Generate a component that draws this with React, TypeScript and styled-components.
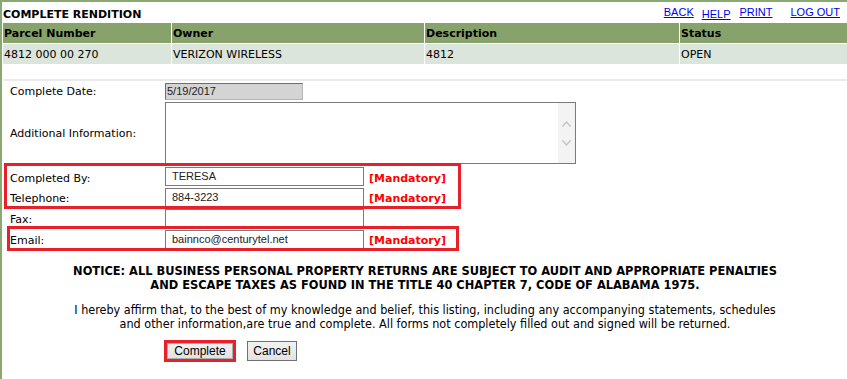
import React from 'react';
import styled, { createGlobalStyle } from 'styled-components';

const GlobalStyle = createGlobalStyle`
    html, body {
        margin: 0;
        padding: 0;
        background: #ffffff;
    }
    body {
        font-family: 'DejaVu Sans', Verdana, sans-serif;
        font-size: 11px;
        color: #000000;
    }
`;

const parcel = {
    number: '4812 000 00 270',
    owner: 'VERIZON WIRELESS',
    description: '4812',
    status: 'OPEN',
};

const Page = styled.div`
    height: 379px;
    box-sizing: border-box;
    border-top: 2px solid #8aa871;
    border-left: 2px solid #8aa871;
    padding-left: 1px;
`;

const TitleBar = styled.div`
    display: flex;
    justify-content: space-between;
    height: 21px;
`;

const Title = styled.h1`
    margin: 0;
    padding-top: 6px;
    font-size: 11px;
    font-weight: bold;
    line-height: 13px;
`;

const Links = styled.nav`
    display: flex;
    align-items: flex-start;
    padding-top: 4px;
    padding-right: 7px;
`;

const NavLink = styled.a<{ $gap: number; $drop?: number }>`
    margin-left: ${({ $gap }) => $gap}px;
    margin-top: ${({ $drop }) => $drop || 0}px;
    font-family: 'Liberation Sans', Arial, sans-serif;
    font-size: 11px;
    line-height: 13px;
    color: #0000ee;
    text-decoration: underline;
    cursor: pointer;
`;

const Grid = styled.div`
    display: grid;
    grid-template-columns: 168px 252px 254px 1fr;
    column-gap: 1px;
    row-gap: 1px;
    margin-bottom: 15px;
`;

const HeadCell = styled.div`
    height: 20px;
    background: #87a36b;
    font-weight: bold;
    font-size: 11px;
    line-height: 21px;
    padding-left: 1px;
`;

const DataCell = styled.div`
    height: 20px;
    background: #dbe5db;
    font-size: 11px;
    line-height: 21px;
    padding-left: 1px;
`;

const Separator = styled.hr`
    margin: 0;
    border: 0;
    height: 2px;
    background: #ebebeb;
`;

const Form = styled.div`
    padding-left: 7px;
    display: flex;
    flex-direction: column;
`;

const Row = styled.div<{ $height: number; $drop?: number }>`
    display: grid;
    grid-template-columns: 155px 199px auto;
    align-items: center;
    height: ${({ $height }) => $height}px;

    & > label,
    & > span {
        padding-top: ${({ $drop }) => $drop || 0}px;
    }
`;

const Label = styled.label`
    font-size: 11px;
    line-height: 13px;
`;

const DateInput = styled.div`
    width: 138px;
    height: 17px;
    box-sizing: border-box;
    background: #d4d4d4;
    border: 1px solid #b4b4b4;
    border-top-color: #6e6e6e;
    border-left-color: #6e6e6e;
    font-family: 'Liberation Sans', Arial, sans-serif;
    font-size: 11px;
    line-height: 15px;
    padding-left: 1px;
    color: #222;
`;

const TextBox = styled.div`
    grid-column: 2 / 4;
    width: 411px;
    height: 62px;
    box-sizing: border-box;
    border: 1px solid #7a7a7a;
    display: flex;
    justify-content: flex-end;
    background: #fff;
`;

const ScrollTrack = styled.div`
    width: 17px;
    background: #f3f3f3;
    display: flex;
    flex-direction: column;
    align-items: center;
    justify-content: center;
    gap: 13px;
`;

const TextInput = styled.div`
    width: 199px;
    height: 19px;
    box-sizing: border-box;
    border: 1px solid #7a7a7a;
    font-family: 'Liberation Sans', Arial, sans-serif;
    font-size: 11px;
    line-height: 13px;
    padding: 2px 0 0 6px;
    color: #222;
    background: #fff;
`;

const Mandatory = styled.span`
    margin-left: 5px;
    color: #ff0000;
    font-weight: bold;
    font-size: 11px;
    line-height: 13px;
`;

const Marked = styled.div<{ $top: number; $left: number; $right: number; $bottom: number; $mt?: number }>`
    position: relative;
    width: 445px;
    margin-top: ${({ $mt }) => $mt || 0}px;

    &::after {
        content: '';
        position: absolute;
        top: ${({ $top }) => $top}px;
        left: ${({ $left }) => $left}px;
        right: ${({ $right }) => $right}px;
        bottom: ${({ $bottom }) => $bottom}px;
        border: 3px solid #e8202a;
        pointer-events: none;
    }
`;

const Notice = styled.p`
    margin: 14px 0 0 0;
    text-align: center;
    font-family: 'DejaVu Sans Condensed', 'DejaVu Sans', sans-serif;
    font-stretch: condensed;
    font-weight: bold;
    font-size: 12.7px;
    line-height: 14px;
`;

const Affirm = styled.p`
    margin: 11px 0 0 0;
    text-align: center;
    font-family: 'DejaVu Sans Condensed', 'DejaVu Sans', sans-serif;
    font-stretch: condensed;
    font-size: 12.5px;
    line-height: 14px;
`;

const Buttons = styled.div`
    display: flex;
    align-items: center;
    gap: 14px;
    margin-top: 10px;
    padding-left: 164px;
`;

const Button = styled.button<{ $marked?: boolean; $width: number }>`
    width: ${({ $width }) => $width}px;
    height: ${({ $marked }) => ($marked ? 16 : 20)}px;
    box-sizing: border-box;
    padding: 0;
    border: 1px solid ${({ $marked }) => ($marked ? '#adadad' : '#707070')};
    outline: ${({ $marked }) => ($marked ? '3px solid #e8202a' : 'none')};
    background: linear-gradient(#f2f2f2, #e2e2e2);
    font-family: 'Liberation Sans', Arial, sans-serif;
    font-size: 12px;
    color: #000;
`;

const Chevron = ({ up }: { up?: boolean }) => (
    <svg width="9" height="6" viewBox="0 0 9 6">
        <path
            d={up ? 'M0.5 5.5 L4.5 1 L8.5 5.5' : 'M0.5 0.5 L4.5 5 L8.5 0.5'}
            fill="none"
            stroke="#c2c2c2"
            strokeWidth="1.3"
        />
    </svg>
);

const App = () => {
    return (
        <>
            <GlobalStyle />
            <Page>
                <TitleBar>
                    <Title>COMPLETE RENDITION</Title>
                    <Links>
                        <NavLink $gap={0}>BACK</NavLink>
                        <NavLink $gap={8} $drop={2}>HELP</NavLink>
                        <NavLink $gap={9}>PRINT</NavLink>
                        <NavLink $gap={18}>LOG OUT</NavLink>
                    </Links>
                </TitleBar>

                <Grid>
                    <HeadCell>Parcel Number</HeadCell>
                    <HeadCell>Owner</HeadCell>
                    <HeadCell>Description</HeadCell>
                    <HeadCell>Status</HeadCell>
                    <DataCell>{parcel.number}</DataCell>
                    <DataCell>{parcel.owner}</DataCell>
                    <DataCell>{parcel.description}</DataCell>
                    <DataCell>{parcel.status}</DataCell>
                </Grid>

                <Separator />

                <Form>
                    <Row $height={20}>
                        <Label>Complete Date:</Label>
                        <DateInput>5/19/2017</DateInput>
                    </Row>
                    <Row $height={64}>
                        <Label>Additional Information:</Label>
                        <TextBox>
                            <ScrollTrack>
                                <Chevron up />
                                <Chevron />
                            </ScrollTrack>
                        </TextBox>
                    </Row>

                    <Marked $mt={1} $top={-3} $left={-6} $right={-6} $bottom={-1}>
                        <Row $height={21} $drop={3}>
                            <Label>Completed By:</Label>
                            <TextInput>TERESA</TextInput>
                            <Mandatory>[Mandatory]</Mandatory>
                        </Row>
                        <Row $height={21} $drop={2}>
                            <Label>Telephone:</Label>
                            <TextInput>884-3223</TextInput>
                            <Mandatory>[Mandatory]</Mandatory>
                        </Row>
                    </Marked>

                    <Row $height={21} $drop={1}>
                        <Label>Fax:</Label>
                        <TextInput />
                    </Row>

                    <Marked $top={-3} $left={-3} $right={-4} $bottom={-1}>
                        <Row $height={21} $drop={1}>
                            <Label>Email:</Label>
                            <TextInput>bainnco@centurytel.net</TextInput>
                            <Mandatory>[Mandatory]</Mandatory>
                        </Row>
                    </Marked>
                </Form>

                <Notice>
                    NOTICE: ALL BUSINESS PERSONAL PROPERTY RETURNS ARE SUBJECT TO AUDIT AND APPROPRIATE PENALTIES
                    <br />
                    AND ESCAPE TAXES AS FOUND IN THE TITLE 40 CHAPTER 7, CODE OF ALABAMA 1975.
                </Notice>
                <Affirm>
                    I hereby affirm that, to the best of my knowledge and belief, this listing, including any accompanying statements, schedules
                    <br />
                    and other information,are true and complete. All forms not completely filled out and signed will be returned.
                </Affirm>

                <Buttons>
                    <Button $marked $width={66}>Complete</Button>
                    <Button $width={50}>Cancel</Button>
                </Buttons>
            </Page>
        </>
    );
};

export default App;
